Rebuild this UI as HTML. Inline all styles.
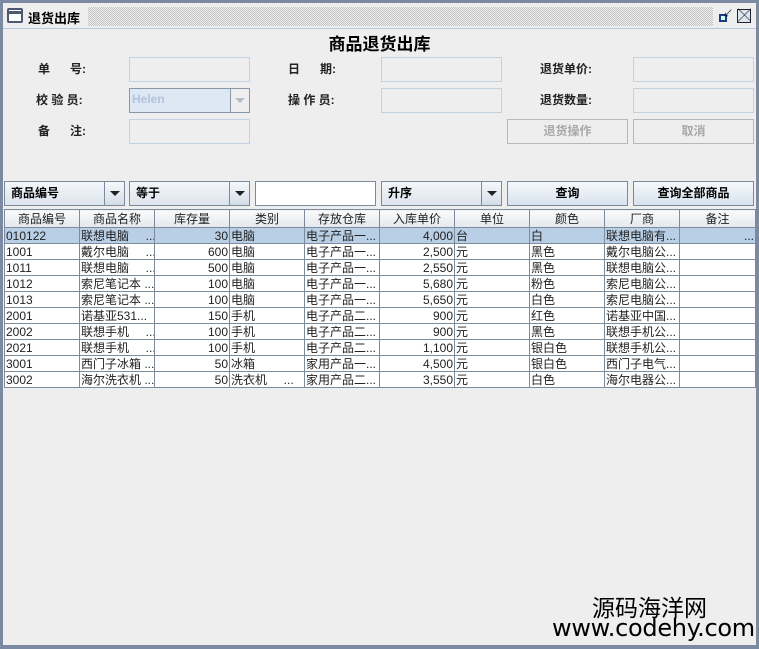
<!DOCTYPE html>
<html><head><meta charset="utf-8"><style>
*{box-sizing:border-box;margin:0;padding:0}
body{width:759px;height:649px;background:#7b8aa0;position:relative;overflow:hidden;font-family:"Liberation Sans","Noto Sans CJK SC",sans-serif;font-size:12px;color:#000}
#win{position:absolute;left:3px;top:3px;width:753px;height:642px;background:#eeeeee}
#tb{position:absolute;left:0;top:0;width:753px;height:26px;background:#eeeeee;border-bottom:1px solid #b8c8dc}
#dots{position:absolute;left:85px;top:4px;width:625px;height:19px;background-image:repeating-conic-gradient(#c4c4c4 0 25%,#eeeeee 0 50%);background-size:2px 2px}
.abs{position:absolute}
.lbl{position:absolute;font-weight:bold;font-size:12px;color:#222}
.inp{position:absolute;width:121px;height:25px;border:1px solid #c0d2e4;background:#eeeeee}
.btn{position:absolute;width:121px;height:25px;border:1px solid #7a8a9c;background:linear-gradient(#f6f9fc,#d8e2ee);font-weight:bold;text-align:center;line-height:23px}
.btnd{position:absolute;width:121px;height:25px;border:1px solid #b8b8b8;background:#eeeeee;font-weight:bold;color:#a8a8a8;text-align:center;line-height:23px}
.cb{position:absolute;width:121px;height:25px;border:1px solid #7a8a9c;background:linear-gradient(#f4f6f9,#dde4ec);font-weight:bold;padding-left:6px;line-height:22px}
.cb .ar{position:absolute;right:0;top:0;width:20px;height:23px;border-left:1px solid #7a8a9c;background:linear-gradient(#f6f9fc,#d4dde8)}
.cb .ar:after{content:"";position:absolute;left:5px;top:9px;border-left:5px solid transparent;border-right:5px solid transparent;border-top:5px solid #222}
table{position:absolute;left:1px;top:206px;border-collapse:collapse;table-layout:fixed;width:751px}
td,th{border:1px solid #7d8b9b;height:16px;padding:0 1px;white-space:nowrap;overflow:hidden;font-weight:normal;font-size:12px;line-height:14px}
th{height:18px;background:linear-gradient(#fafafa,#e4e8ec);text-align:center;color:#222}
td{background:#fff;color:#222}
tr.sel td{background:#b8cfe5}
.r{text-align:right}
</style></head><body>
<div id="win">
 <div id="tb">
  <div class="abs" style="left:4px;top:5px;width:16px;height:15px;border:2px solid #4a5870;border-radius:2px;background:#fff"><div style="height:3px;background:#4a5870;margin-top:1px"></div></div>
  <div class="abs" style="left:25px;top:5px;font-weight:bold;font-size:13px">退货出库</div>
  <div id="dots"></div>
  <div class="abs" style="left:716px;top:11px;width:8px;height:8px;border:2px solid #1f3a80;background:#cfe"></div>
  <div class="abs" style="left:720px;top:2px;font-size:10px;color:#123">↙</div>
  <div class="abs" style="left:734px;top:6px;width:14px;height:14px;border:1px solid #223;background:#dde6f0;font-size:13px;line-height:11px;text-align:center">╳</div>
 </div>
 <div class="abs" style="left:0;top:27px;width:753px;text-align:center;font-weight:bold;font-size:17px">商品退货出库</div>

 <div class="lbl" style="left:35px;top:57px">单&nbsp;&nbsp;&nbsp;&nbsp;&nbsp;&nbsp;号:</div>
 <div class="lbl" style="left:33px;top:88px">校 验 员:</div>
 <div class="lbl" style="left:35px;top:119px">备&nbsp;&nbsp;&nbsp;&nbsp;&nbsp;&nbsp;注:</div>
 <div class="inp" style="left:126px;top:54px"></div>
 <div class="inp" style="left:126px;top:85px;border-color:#8898a8;background:#dde8f4;color:#b0c4dc;font-weight:bold;padding-left:2px;line-height:21px">Helen<div style="position:absolute;right:0;top:0;width:19px;height:23px;border-left:1px solid #8898a8;background:#eeeeee"><div style="position:absolute;left:4px;top:9px;border-left:5px solid transparent;border-right:5px solid transparent;border-top:5px solid #b0bcc8"></div></div></div>
 <div class="inp" style="left:126px;top:116px"></div>

 <div class="lbl" style="left:285px;top:57px">日&nbsp;&nbsp;&nbsp;&nbsp;&nbsp;&nbsp;期:</div>
 <div class="lbl" style="left:285px;top:88px">操 作 员:</div>
 <div class="inp" style="left:378px;top:54px"></div>
 <div class="inp" style="left:378px;top:85px"></div>

 <div class="lbl" style="left:537px;top:57px">退货单价:</div>
 <div class="lbl" style="left:537px;top:88px">退货数量:</div>
 <div class="inp" style="left:630px;top:54px"></div>
 <div class="inp" style="left:630px;top:85px"></div>
 <div class="btnd" style="left:504px;top:116px">退货操作</div>
 <div class="btnd" style="left:630px;top:116px">取消</div>

 <div class="cb" style="left:1px;top:178px">商品编号<div class="ar"></div></div>
 <div class="cb" style="left:126px;top:178px">等于<div class="ar"></div></div>
 <div class="abs" style="left:252px;top:178px;width:121px;height:25px;border:1px solid #7a8a9c;background:#fff"></div>
 <div class="cb" style="left:378px;top:178px">升序<div class="ar"></div></div>
 <div class="btn" style="left:504px;top:178px">查询</div>
 <div class="btn" style="left:630px;top:178px">查询全部商品</div>

 <table>
 <colgroup><col style="width:75px"><col style="width:75px"><col style="width:75px"><col style="width:75px"><col style="width:75px"><col style="width:75px"><col style="width:75px"><col style="width:75px"><col style="width:75px"><col style="width:76px"></colgroup>
 <tr><th>商品编号</th><th>商品名称</th><th>库存量</th><th>类别</th><th>存放仓库</th><th>入库单价</th><th>单位</th><th>颜色</th><th>厂商</th><th>备注</th></tr>
 <tr class="sel"><td>010122</td><td>联想电脑&nbsp;&nbsp;&nbsp;&nbsp;&nbsp;...</td><td class="r">30</td><td>电脑</td><td>电子产品一...</td><td class="r">4,000</td><td>台</td><td>白</td><td>联想电脑有...</td><td class="r">...</td></tr>
 <tr><td>1001</td><td>戴尔电脑&nbsp;&nbsp;&nbsp;&nbsp;&nbsp;...</td><td class="r">600</td><td>电脑</td><td>电子产品一...</td><td class="r">2,500</td><td>元</td><td>黑色</td><td>戴尔电脑公...</td><td></td></tr>
 <tr><td>1011</td><td>联想电脑&nbsp;&nbsp;&nbsp;&nbsp;&nbsp;...</td><td class="r">500</td><td>电脑</td><td>电子产品一...</td><td class="r">2,550</td><td>元</td><td>黑色</td><td>联想电脑公...</td><td></td></tr>
 <tr><td>1012</td><td>索尼笔记本 ...</td><td class="r">100</td><td>电脑</td><td>电子产品一...</td><td class="r">5,680</td><td>元</td><td>粉色</td><td>索尼电脑公...</td><td></td></tr>
 <tr><td>1013</td><td>索尼笔记本 ...</td><td class="r">100</td><td>电脑</td><td>电子产品一...</td><td class="r">5,650</td><td>元</td><td>白色</td><td>索尼电脑公...</td><td></td></tr>
 <tr><td>2001</td><td>诺基亚531...</td><td class="r">150</td><td>手机</td><td>电子产品二...</td><td class="r">900</td><td>元</td><td>红色</td><td>诺基亚中国...</td><td></td></tr>
 <tr><td>2002</td><td>联想手机&nbsp;&nbsp;&nbsp;&nbsp;&nbsp;...</td><td class="r">100</td><td>手机</td><td>电子产品二...</td><td class="r">900</td><td>元</td><td>黑色</td><td>联想手机公...</td><td></td></tr>
 <tr><td>2021</td><td>联想手机&nbsp;&nbsp;&nbsp;&nbsp;&nbsp;...</td><td class="r">100</td><td>手机</td><td>电子产品二...</td><td class="r">1,100</td><td>元</td><td>银白色</td><td>联想手机公...</td><td></td></tr>
 <tr><td>3001</td><td>西门子冰箱 ...</td><td class="r">50</td><td>冰箱</td><td>家用产品一...</td><td class="r">4,500</td><td>元</td><td>银白色</td><td>西门子电气...</td><td></td></tr>
 <tr><td>3002</td><td>海尔洗衣机 ...</td><td class="r">50</td><td>洗衣机&nbsp;&nbsp;&nbsp;&nbsp;&nbsp;...</td><td>家用产品二...</td><td class="r">3,550</td><td>元</td><td>白色</td><td>海尔电器公...</td><td></td></tr>
 </table>

 <div class="abs" style="left:589px;top:590px;font-size:23px;line-height:26px;font-family:'Noto Sans CJK SC',sans-serif">源码海洋网</div>
 <div class="abs" style="left:549px;top:612px;font-size:24px;line-height:27px;font-family:'DejaVu Sans',sans-serif;letter-spacing:-0.3px">www.codehy.com</div>
</div>
</body></html>
